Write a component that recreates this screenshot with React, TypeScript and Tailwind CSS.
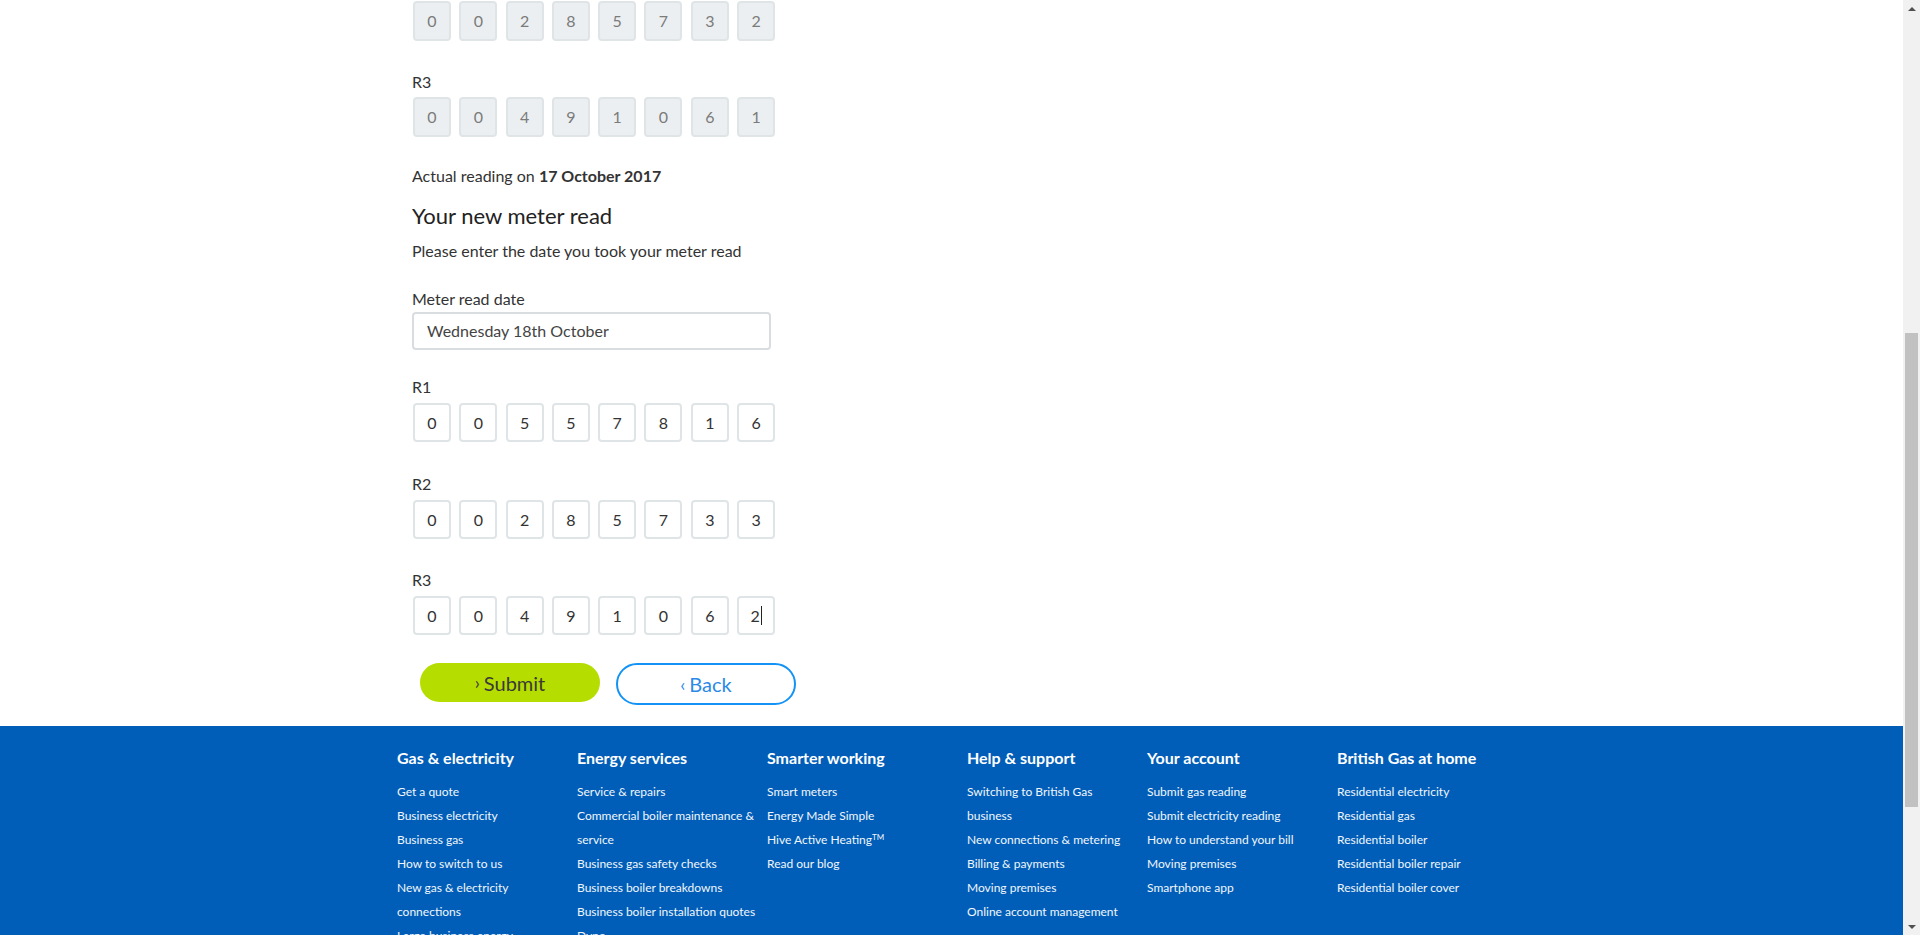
import React from 'react';

const font = { fontFamily: 'Lato, "Open Sans", sans-serif' };

const oldReads = [
  { label: '', digits: ['0', '0', '2', '8', '5', '7', '3', '2'] },
  { label: 'R3', digits: ['0', '0', '4', '9', '1', '0', '6', '1'] },
];

const newReads = [
  { label: 'R1', digits: ['0', '0', '5', '5', '7', '8', '1', '6'], gap: 'mt-[27px]' },
  { label: 'R2', digits: ['0', '0', '2', '8', '5', '7', '3', '3'], gap: 'mt-[32px]' },
  { label: 'R3', digits: ['0', '0', '4', '9', '1', '0', '6', '2'], gap: 'mt-[31px]' },
];

const footerCols = [
  {
    title: 'Gas & electricity',
    w: 'w-[180px] pr-[8px]',
    links: ['Get a quote', 'Business electricity', 'Business gas', 'How to switch to us', 'New gas & electricity connections', 'Large business energy'],
  },
  {
    title: 'Energy services',
    w: 'w-[190px] pr-[6px]',
    links: ['Service & repairs', 'Commercial boiler maintenance & service', 'Business gas safety checks', 'Business boiler breakdowns', 'Business boiler installation quotes', 'Dyno'],
  },
  {
    title: 'Smarter working',
    w: 'w-[200px] pr-[8px]',
    links: ['Smart meters', 'Energy Made Simple', 'Hive Active Heating', 'Read our blog'],
  },
  {
    title: 'Help & support',
    w: 'w-[180px] pr-[16px]',
    links: ['Switching to British Gas business', 'New connections & metering', 'Billing & payments', 'Moving premises', 'Online account management'],
  },
  {
    title: 'Your account',
    w: 'w-[190px] pr-[8px]',
    links: ['Submit gas reading', 'Submit electricity reading', 'How to understand your bill', 'Moving premises', 'Smartphone app'],
  },
  {
    title: 'British Gas at home',
    w: 'w-[200px] pr-[8px]',
    links: ['Residential electricity', 'Residential gas', 'Residential boiler', 'Residential boiler repair', 'Residential boiler cover'],
  },
];

function DigitRow({ digits, disabled, cursorLast }: { digits: string[]; disabled?: boolean; cursorLast?: boolean }) {
  return (
    <div className="flex gap-[8.3px] pl-px">
      {digits.map((d, i) => (
        <div
          key={i}
          className={
            disabled
              ? 'w-[38px] h-[40px] rounded-[4px] border-2 border-[#dfe5e7] bg-[#eceff1] text-[#7b7b7b] flex items-center justify-center text-[16px]'
              : 'w-[38px] h-[39px] rounded-[4px] border-2 border-[#dfe5e7] bg-white text-[#333] flex items-center justify-center text-[16px]'
          }
        >
          {d}
          {cursorLast && i === digits.length - 1 && <span className="w-px h-[19px] bg-[#222] ml-px" />}
        </div>
      ))}
    </div>
  );
}

function Scrollbar() {
  return (
    <div className="w-[17px] h-full bg-[#f1f1f1] flex flex-col items-center shrink-0">
      <div className="h-[17px] flex items-center justify-center">
        <div className="w-0 h-0 border-l-[4px] border-r-[4px] border-b-[4px] border-l-transparent border-r-transparent border-b-[#505050]" />
      </div>
      <div className="w-[13px] h-[474px] mt-[316px] bg-[#c1c1c1]" />
      <div className="flex-1" />
      <div className="h-[17px] flex items-center justify-center">
        <div className="w-0 h-0 border-l-[4px] border-r-[4px] border-t-[4px] border-l-transparent border-r-transparent border-t-[#505050]" />
      </div>
    </div>
  );
}

export default function App() {
  return (
    <div className="h-[935px] w-full flex overflow-hidden bg-white" style={font}>
      <div className="flex-1 flex flex-col overflow-hidden">
        {/* Form */}
        <main className="h-[726px] shrink-0 pl-[412px] pt-px text-[#333] text-[16px]">
          <DigitRow digits={oldReads[0].digits} disabled />
          <div className="mt-[31px] leading-[20px]">R3</div>
          <div className="mt-[5px]">
            <DigitRow digits={oldReads[1].digits} disabled />
          </div>
          <p className="mt-[29px] leading-[20px]">
            Actual reading on <span className="font-bold">17 October 2017</span>
          </p>
          <h2 className="mt-[16px] text-[22px] leading-[28px] text-[#222]">Your new meter read</h2>
          <p className="mt-[11px] leading-[20px]">Please enter the date you took your meter read</p>
          <label className="block mt-[28px] leading-[20px]">Meter read date</label>
          <div className="mt-[3px] w-[359px] h-[38px] rounded-[4px] border-2 border-[#dadddf] flex items-center px-[13px] text-[16px] text-[#444]">
            Wednesday 18th October
          </div>
          {newReads.map((r, idx) => (
            <div key={r.label} className={r.gap}>
              <div className="leading-[20px]">{r.label}</div>
              <div className="mt-[6px]">
                <DigitRow digits={r.digits} cursorLast={idx === 2} />
              </div>
            </div>
          ))}
          <div className="mt-[28px] flex items-start gap-[16px] pl-[8px]">
            <button className="w-[180px] h-[39px] rounded-full bg-[#b5de00] text-[#3a3a3a] text-[20px] flex items-center justify-center gap-[4px]">
              <span className="text-[18px]">&#8250;</span>Submit
            </button>
            <button className="w-[180px] h-[42px] rounded-full border-2 border-[#1593f5] bg-white text-[#2b8ae6] text-[20px] flex items-center justify-center gap-[4px]">
              <span className="text-[18px]">&#8249;</span>Back
            </button>
          </div>
        </main>

        {/* Footer */}
        <footer className="flex-1 bg-[#005eb8] text-white pl-[397px] pt-[20px]">
          <div className="flex">
            {footerCols.map((c) => (
              <div key={c.title} className={c.w + ' shrink-0'}>
                <h3 className="font-bold text-[16px] leading-[24px]">{c.title}</h3>
                <ul className="mt-[10px] text-[12px] leading-[24px] text-[#f2f6fb]">
                  {c.links.map((l) => (
                    <li key={l}>
                      {l}
                      {l === 'Hive Active Heating' && <sup className="text-[8px]">TM</sup>}
                    </li>
                  ))}
                </ul>
              </div>
            ))}
          </div>
        </footer>
      </div>
      <Scrollbar />
    </div>
  );
}
